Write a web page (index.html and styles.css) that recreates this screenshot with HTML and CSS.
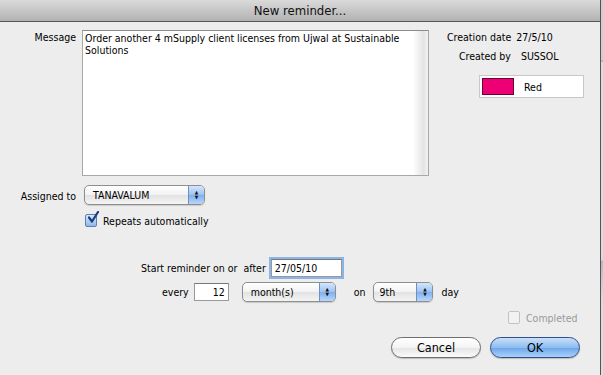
FILE: index.html
```html
<!DOCTYPE html>
<html lang="en">

<head>
    <meta charset="UTF-8">
    <title>New reminder...</title>
    <link rel="stylesheet" href="styles.css">
</head>

<body>

    <div class="dialog">
        <div class="titlebar">New reminder...</div>

        <div class="top-row">
            <div class="label">Message</div>
            <div class="message">
                <div class="message-text">Order another 4 mSupply client licenses from Ujwal at Sustainable Solutions</div>
                <div class="scroll-strip"></div>
            </div>
            <div class="side">
                <div class="info"><span class="info-label">Creation date</span><span>27/5/10</span></div>
                <div class="info info-by"><span class="info-label">Created by</span><span>SUSSOL</span></div>
                <div class="colour-box">
                    <span class="swatch"></span>
                    <span>Red</span>
                </div>
            </div>
        </div>

        <div class="assign-row">
            <div class="label">Assigned to</div>
            <div class="popup popup-assign">
                <span>TANAVALUM</span>
                <span class="arrows"><span>▲</span><span>▼</span></span>
            </div>
        </div>

        <div class="check-row">
            <span class="checkbox checked">
                <svg width="14" height="14" viewBox="0 0 14 14"><path d="M3 6.5 L6 10.5 L12 1" fill="none" stroke="#1b3d7a" stroke-width="2.2" stroke-linecap="round" stroke-linejoin="round" /></svg>
            </span>
            <span>Repeats automatically</span>
        </div>

        <div class="start-row">
            <span>Start reminder on or&nbsp; after</span>
            <span class="field field-date">27/05/10</span>
        </div>

        <div class="every-row">
            <span>every</span>
            <span class="field field-num">12</span>
            <div class="popup popup-unit">
                <span>month(s)</span>
                <span class="arrows"><span>▲</span><span>▼</span></span>
            </div>
            <span class="on">on</span>
            <div class="popup popup-day">
                <span>9th</span>
                <span class="arrows"><span>▲</span><span>▼</span></span>
            </div>
            <span class="day">day</span>
        </div>

        <div class="completed-row">
            <span class="checkbox disabled"></span>
            <span>Completed</span>
        </div>

        <div class="button-row">
            <button class="btn">Cancel</button>
            <button class="btn btn-ok">OK</button>
        </div>
    </div>

    <div class="backdrop"></div>

</body>

</html>
```

FILE: styles.css
```css
* {
    margin: 0;
    padding: 0;
    box-sizing: border-box;
}

body {
    font-family: 'DejaVu Sans Condensed', 'DejaVu Sans', sans-serif;
    font-size: 10.5px;
    color: #000000;
    background: #ededed;
    width: 603px;
    height: 375px;
    overflow: hidden;
    display: flex;
}

.dialog {
    width: 600px;
    height: 375px;
    background: #ededed;
    display: flex;
    flex-direction: column;
}

.backdrop {
    width: 3px;
    border-left: 1px solid #555555;
    background: linear-gradient(#cfcfcf 0, #cfcfcf 60px, #9a9a9a 61px, #dcdcdc 62px, #dcdcdc 260px, #b0b8c8 261px, #dcdcdc 300px);
}

.titlebar {
    height: 22px;
    background: linear-gradient(#dadada, #b2b2b2);
    border-bottom: 1px solid #555555;
    text-align: center;
    font-size: 13px;
    line-height: 21px;
    color: #111111;
}

.top-row {
    display: flex;
    margin-top: 8px;
}

.label {
    width: 76px;
    text-align: right;
    padding-top: 1px;
}

.message {
    margin-left: 6px;
    width: 347px;
    height: 146px;
    background: #ffffff;
    border: 1px solid #a8a8a8;
    border-top-color: #8c8c8c;
    display: flex;
}

.message-text {
    flex: 1;
    padding: 1px 0 0 2px;
    line-height: 12px;
}

.scroll-strip {
    width: 15px;
    background: linear-gradient(90deg, #ffffff, #e4e4e4 70%, #f2f2f2);
}

.side {
    margin-left: 18px;
    display: flex;
    flex-direction: column;
}

.info {
    display: flex;
    gap: 5px;
    padding-top: 1px;
}

.info-by {
    margin-top: 6px;
    margin-left: 12px;
    gap: 10px;
}

.colour-box {
    margin: 13px 0 0 32px;
    width: 105px;
    height: 23px;
    background: #ffffff;
    border: 1px solid #c8c8c8;
    display: flex;
    align-items: center;
    gap: 10px;
    padding-left: 2px;
}

.swatch {
    width: 32px;
    height: 17px;
    background: #ee0074;
    border: 1px solid #6a0038;
}

.assign-row {
    display: flex;
    align-items: center;
    margin-top: 9px;
}

.popup {
    height: 20px;
    background: linear-gradient(#ffffff, #f2f2f2 50%, #e2e2e2 51%, #f4f4f4);
    border: 1px solid #8e8e8e;
    border-radius: 5px;
    display: flex;
    align-items: center;
    justify-content: space-between;
    padding-left: 8px;
    overflow: hidden;
    box-shadow: 0 1px 1px rgba(0, 0, 0, 0.15);
}

.popup-assign {
    margin-left: 8px;
    width: 121px;
}

.arrows {
    width: 16px;
    height: 100%;
    background: linear-gradient(#d5e6fb, #9cc2f1 50%, #7eb0ee 51%, #b8d6fb);
    border-left: 1px solid #6f8fbf;
    display: flex;
    flex-direction: column;
    align-items: center;
    justify-content: center;
    font-size: 5px;
    line-height: 5px;
    color: #111111;
}

.check-row {
    display: flex;
    align-items: center;
    gap: 6px;
    margin: 9px 0 0 85px;
}

.checkbox {
    width: 12px;
    height: 13px;
    border: 1px solid #7a7a7a;
    border-radius: 2px;
    background: linear-gradient(#ffffff, #e6e6e6);
    position: relative;
}

.checkbox.checked {
    background: linear-gradient(#d9e8fa, #8fb8ec);
    border-color: #5c7fb5;
}

.checkbox svg {
    position: absolute;
    left: 0;
    top: -4px;
}

.checkbox.disabled {
    border-color: #c2c2c2;
    background: #f2f2f2;
}

.start-row {
    display: flex;
    align-items: center;
    margin: 32px 0 0 141px;
    gap: 5px;
}

.field {
    background: #ffffff;
    border: 1px solid #999999;
    border-top-color: #777777;
    height: 18px;
    line-height: 16px;
    padding: 0 3px;
}

.field-date {
    width: 71px;
    box-shadow: 0 0 0 2px #8ab4ea;
}

.every-row {
    display: flex;
    align-items: center;
    margin: 5px 0 0 162px;
}

.field-num {
    margin-left: 5px;
    width: 35px;
    text-align: right;
}

.popup-unit {
    margin-left: 13px;
    width: 94px;
}

.on {
    margin-left: 18px;
}

.popup-day {
    margin-left: 8px;
    width: 60px;
    padding-left: 5px;
}

.day {
    margin-left: 8px;
}

.completed-row {
    display: flex;
    align-items: center;
    gap: 6px;
    margin: 9px 0 0 508px;
    color: #9a9a9a;
}

.button-row {
    display: flex;
    justify-content: flex-end;
    gap: 9px;
    margin: 13px 20px 0 0;
}

.btn {
    font-family: inherit;
    font-size: 12.5px;
    width: 90px;
    height: 21px;
    border: 1px solid #6e6e6e;
    border-radius: 11px;
    background: linear-gradient(#ffffff, #f4f4f4 50%, #e4e4e4 51%, #fbfbfb);
    box-shadow: 0 1px 1px rgba(0, 0, 0, 0.2);
    color: #000000;
}

.btn-ok {
    border-color: #2f4f86;
    background: linear-gradient(#c9e0fa, #8ebdf0 50%, #6ba5ea 51%, #a9d2fb);
}
```
